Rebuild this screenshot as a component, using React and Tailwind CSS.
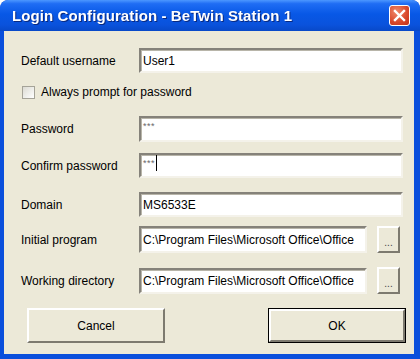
import React from 'react'

const FONT = { fontFamily: '"Liberation Sans", Arial, sans-serif' }

const sunken =
  'bg-white border-2 border-t-[#85827a] border-l-[#85827a] border-b-[#f4f2ea] border-r-[#f4f2ea] shadow-[inset_1px_1px_0_#b8b5a9]'

function Field({ label, value, mt, h, children }) {
  return (
    <div className={`flex items-center ${mt}`}>
      <div className="w-[118px] text-[12px] text-black shrink-0">{label}</div>
      <div className={`flex-1 ${h} ${sunken} flex items-center px-[2px] overflow-hidden`}>
        {value}
      </div>
      {children}
    </div>
  )
}

function Browse() {
  return (
    <button className="ml-[10px] mr-[3px] w-[23px] h-[27px] bg-[#ece9d8] border-2 border-t-white border-l-white border-b-[#7d7a6f] border-r-[#7d7a6f] text-[10px] leading-none pt-[6px] text-[#444]">
      ...
    </button>
  )
}

export default function App() {
  return (
    <div style={FONT} className="w-[420px] h-[359px] bg-[#0a4fdc] rounded-t-[8px] flex flex-col pl-[4px] pr-[6px] pb-[5px] overflow-hidden">
      {/* title bar */}
      <div className="h-[31px] -mr-[6px] -ml-[4px] flex items-center pl-[12px] pr-[10px] rounded-t-[8px] bg-[linear-gradient(#4c97ff_0%,#1f6df4_12%,#0858e6_45%,#0a52dc_80%,#0849c8_100%)]">
        <span className="text-white font-bold text-[15px] tracking-[0.1px] drop-shadow-[1px_1px_0_#0a2a80] flex-1 pt-[2px]">
          Login Configuration - BeTwin Station 1
        </span>
        <div className="w-[21px] h-[21px] rounded-[3px] border border-white bg-[radial-gradient(circle_at_35%_30%,#f08a6c,#d8472a_60%,#c0321a)] flex items-center justify-center">
          <svg width="13" height="13" viewBox="0 0 13 13">
            <path d="M2 2 L11 11 M11 2 L2 11" stroke="white" strokeWidth="2.4" strokeLinecap="square" />
          </svg>
        </div>
      </div>

      {/* client */}
      <div className="flex-1 bg-[#ece9d8] flex flex-col pl-[17px] pr-[11px] pt-[17px]">
        <Field label="Default username" mt="" h="h-[25px]" value={<span className="text-[12px]">User1</span>} />

        <div className="flex items-center mt-[12px] h-[14px]">
          <div className="ml-[1px] w-[13px] h-[13px] bg-[linear-gradient(135deg,#dcdbd3,#ffffff)] border border-[#a5a398]" />
          <span className="ml-[6px] text-[12px] text-black">Always prompt for password</span>
        </div>

        <Field
          label="Password"
          mt="mt-[17px]"
          h="h-[26px]"
          value={<span className="text-[9px] text-[#666] self-start mt-[2px] tracking-[0.5px]">***</span>}
        />
        <Field
          label="Confirm password"
          mt="mt-[11px]"
          h="h-[25px]"
          value={
            <span className="flex items-start self-start">
              <span className="text-[9px] text-[#666] mt-[2px] tracking-[0.5px]">***</span>
              <span className="w-[1px] h-[16px] bg-black ml-[1px]" />
            </span>
          }
        />
        <Field label="Domain" mt="mt-[14px]" h="h-[25px]" value={<span className="text-[12px]">MS6533E</span>} />
        <Field
          label="Initial program"
          mt="mt-[9px]"
          h="h-[27px]"
          value={<span className="text-[12px] whitespace-nowrap">C:\Program Files\Microsoft Office\Office</span>}
        >
          <Browse />
        </Field>
        <Field
          label="Working directory"
          mt="mt-[14px]"
          h="h-[26px]"
          value={<span className="text-[12px] whitespace-nowrap">C:\Program Files\Microsoft Office\Office</span>}
        >
          <Browse />
        </Field>

        <div className="flex justify-between mt-[14px] pl-[6px] -mr-[3px]">
          <button className="w-[138px] h-[35px] bg-[#ece9d8] border-2 border-t-white border-l-white border-b-[#7d7a6f] border-r-[#7d7a6f] text-[12px] text-black">
            Cancel
          </button>
          <button className="w-[138px] h-[35px] border border-black">
            <div className="w-full h-full bg-[#ece9d8] border-2 border-t-white border-l-white border-b-[#7d7a6f] border-r-[#7d7a6f] text-[12px] text-black flex items-center justify-center">
              OK
            </div>
          </button>
        </div>
      </div>
    </div>
  )
}
